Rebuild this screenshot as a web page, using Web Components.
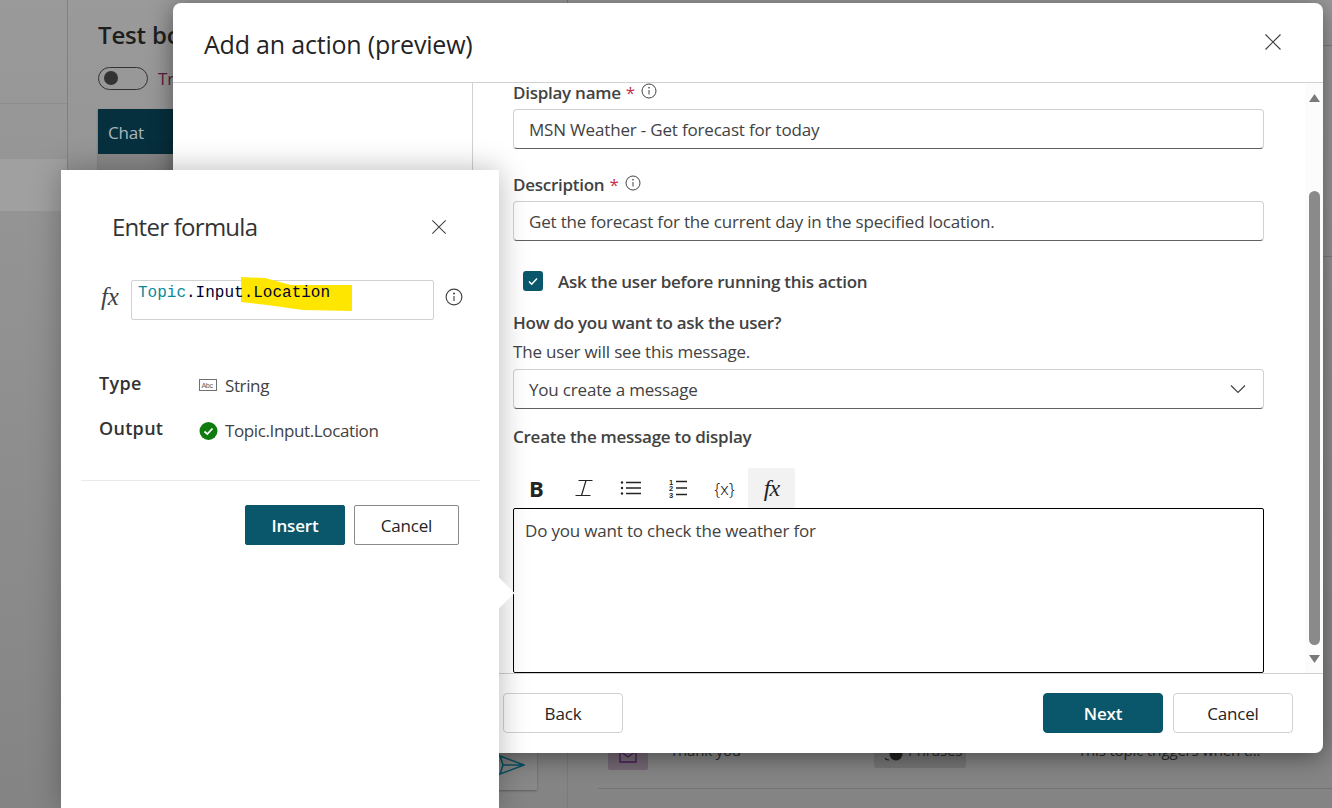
<!DOCTYPE html>
<html lang="en">
<head>
<meta charset="utf-8">
<title>Add an action</title>
<style>
    html, body { margin: 0; height: 808px; overflow: hidden; background: #8c8c8c; }
    body { position: relative; font-family: "Open Sans", "Noto Sans", sans-serif; color: #424242; }
</style>
</head>
<body>
<app-backdrop></app-backdrop>
<action-dialog heading="Add an action (preview)">
    <form-field class="first" label="Display name" required info value="MSN Weather - Get forecast for today"></form-field>
    <form-field class="second" label="Description" required info value="Get the forecast for the current day in the specified location."></form-field>
    <check-row>Ask the user before running this action</check-row>
    <form-field class="ask" label="How do you want to ask the user?" hint="The user will see this message." value="You create a message" dropdown></form-field>
    <message-editor label="Create the message to display">Do you want to check the weather for</message-editor>
</action-dialog>
<formula-popover></formula-popover>

<script>
const FONT = `font-family: "Open Sans", "Noto Sans", sans-serif; letter-spacing: -0.18px;`;
const INFO_ICON = `<svg width="16" height="16" viewBox="0 0 16 16" fill="none" stroke="#424242"><circle cx="8" cy="8" r="7"/><path d="M8 7v4.5"/><circle cx="8" cy="4.8" r=".4" fill="#424242"/></svg>`;
const CLOSE_ICON = `<svg width="18" height="18" viewBox="0 0 18 18" fill="none" stroke="#424242" stroke-width="1.2"><path d="M1.5 1.5l15 15M16.5 1.5l-15 15"/></svg>`;

class AppBackdrop extends HTMLElement {
    constructor() {
        super();
        this.attachShadow({ mode: 'open' });
        this.shadowRoot.innerHTML = `
            <style>
                :host {
                    display: grid;
                    grid-template-columns: 68px 500px 1fr;
                    height: 808px;
                    background: linear-gradient(#9a9a9a, #848484);
                    ${FONT}
                }
                .nav { border-right: 1px solid #808080; }
                .nav .rule { height: 103px; border-bottom: 1px solid #8c8c8c; }
                .nav .band { height: 52px; margin-top: 55px; background: #a0a0a0; }
                .bot { padding: 20px 30px 18px 30px; display: flex; flex-direction: column; border-right: 1px solid #7a7a7a; }
                h2 { margin: 0; font-size: 24px; line-height: 30px; font-weight: 600; color: #1e1e1e; }
                .toggle-row { display: flex; align-items: center; gap: 10px; margin-top: 16px; height: 24px; font-size: 17px; color: #5c1a3a; }
                .toggle { height: 21px; border: 1px solid #333; border-radius: 12px; display: flex; align-items: center; padding-left: 5px; width: 43px; }
                .toggle i { width: 14px; height: 14px; border-radius: 50%; background: #333; }
                .chat { flex: 1; margin-top: 19px; display: flex; flex-direction: column; background: #888; box-shadow: 0 1px 2px rgba(0,0,0,.3); }
                .chat-head { height: 45px; background: #07303e; color: #a9b7bd; font-size: 17px; line-height: 47px; padding-left: 10px; }
                .chat-body { flex: 1; display: flex; justify-content: flex-end; align-items: flex-end; padding: 0 12px 15px 0; color: #0a5568; }
                .rows { padding: 0 0 0 30px; display: flex; flex-direction: column; }
                .line { flex: none; height: 45px; margin-left: -30px; border-bottom: 1px solid #7e7e7e; }
                .line + .line { height: 210px; }
                .row { box-sizing: border-box; height: 49px; margin-top: auto; margin-bottom: 19px; border-bottom: 1px solid #747474; display: flex; align-items: flex-start; font-size: 15px; line-height: 20px; color: #2b2b2b; }
                .tile { width: 40px; height: 30px; background: #746874; margin: 0 22px 0 10px; flex: none; border-radius: 2px; display: flex; align-items: center; justify-content: center; color: #4a1a5c; }
                .name { width: 204px; }
                .chip { box-sizing: border-box; width: 92px; height: 28px; margin-right: 112px; padding-left: 11px; display: flex; gap: 5px; background: #767676; border-radius: 3px; }
                .chip svg { margin-top: 7px; }
            </style>
            <div class="nav"><div class="rule"></div><div class="band"></div></div>
            <div class="bot">
                <h2>Test bot</h2>
                <div class="toggle-row"><span class="toggle"><i></i></span><span>Track</span></div>
                <div class="chat">
                    <div class="chat-head">Chat</div>
                    <div class="chat-body">
                        <svg width="26" height="20" viewBox="0 0 26 20" fill="none" stroke="currentColor" stroke-width="1.6"><path d="M1 1l24 9-24 9 3-9-3-9zM4 10h21"/></svg>
                    </div>
                </div>
            </div>
            <div class="rows">
                <div class="line"></div>
                <div class="line"></div>
                <div class="row">
                    <span class="tile"><svg width="20" height="20" viewBox="0 0 20 20" fill="none" stroke="currentColor" stroke-width="1.3"><path d="M2 6l8 6 8-6M2 6v11h16V6"/></svg></span>
                    <span class="name">Thank you</span>
                    <span class="chip"><svg width="18" height="14" viewBox="0 0 18 14"><path d="M4 1a6 6 0 0 0 0 12" fill="none" stroke="#222" stroke-width="1.2"/><circle cx="11" cy="7" r="6.5" fill="#222"/></svg><span>Phrases</span></span>
                    <span>This topic triggers when t...</span>
                </div>
            </div>
        `;
    }
}

class ActionDialog extends HTMLElement {
    constructor() {
        super();
        this.attachShadow({ mode: 'open' });
        this.shadowRoot.innerHTML = `
            <style>
                :host {
                    position: absolute;
                    left: 173px;
                    top: 3px;
                    width: 1150px;
                    height: 750px;
                    display: flex;
                    flex-direction: column;
                    background: #fff;
                    border-radius: 8px;
                    overflow: hidden;
                    box-shadow: 0 4px 24px rgba(0,0,0,.45);
                    ${FONT}
                }
                header {
                    flex: none;
                    display: flex;
                    align-items: center;
                    justify-content: space-between;
                    padding: 0 41px 1px 31px;
                    height: 78px;
                    border-bottom: 1px solid #d1d1d1;
                }
                h1 { margin: 4px 0 0; font-size: 25px; font-weight: 500; letter-spacing: -0.2px; color: #242424; }
                .close { height: 18px; }
                .body { flex: 1; min-height: 0; display: grid; grid-template-columns: 300px 1fr 18px; border-bottom: 1px solid #d1d1d1; }
                .side { border-right: 1px solid #d1d1d1; }
                .form { padding: 0 41px 0 40px; display: flex; flex-direction: column; overflow: hidden; }
                .scroll { background: #fcfcfc; display: flex; flex-direction: column; align-items: center; padding: 11px 0 7px 0; }
                .scroll svg { flex: none; }
                .thumb { width: 11px; height: 454px; background: #8a8a8a; border-radius: 6px; margin: 89px 0 10px; }
                footer { height: 79px; flex: none; display: flex; justify-content: space-between; align-items: center; padding: 0 30px 1px 330px; box-sizing: border-box; }
                .group { display: flex; gap: 10px; }
            </style>
            <header>
                <h1></h1>
                <span class="close">${CLOSE_ICON}</span>
            </header>
            <div class="body">
                <div class="side"></div>
                <div class="form"><slot></slot></div>
                <div class="scroll">
                    <svg width="11" height="8" viewBox="0 0 11 8"><path d="M5.5 0L11 8H0z" fill="#7a7a7a"/></svg>
                    <div class="thumb"></div>
                    <svg width="11" height="8" viewBox="0 0 11 8"><path d="M0 0h11L5.5 8z" fill="#7a7a7a"/></svg>
                </div>
            </div>
            <footer>
                <ui-button>Back</ui-button>
                <div class="group">
                    <ui-button primary>Next</ui-button>
                    <ui-button>Cancel</ui-button>
                </div>
            </footer>
        `;
        this.shadowRoot.querySelector('h1').textContent = this.getAttribute('heading');
    }
}

class UiButton extends HTMLElement {
    constructor() {
        super();
        this.attachShadow({ mode: 'open' });
        this.shadowRoot.innerHTML = `
            <style>
                :host {
                    display: flex;
                    align-items: center;
                    justify-content: center;
                    box-sizing: border-box;
                    width: var(--btn-width, 120px);
                    height: 40px;
                    border: 1px solid #d1d1d1;
                    border-radius: var(--btn-radius, 4px);
                    background: #fff;
                    color: #242424;
                    font-size: 17px;
                    font-weight: 500;
                    ${FONT}
                }
                :host([primary]) { background: #0a566a; border-color: #0a566a; color: #fff; font-weight: 600; }
            </style>
            <slot></slot>
        `;
    }
}

class FormField extends HTMLElement {
    constructor() {
        super();
        this.attachShadow({ mode: 'open' });
        const req = this.hasAttribute('required') ? `<span class="req">*</span>` : '';
        const info = this.hasAttribute('info') ? `<span class="info">${INFO_ICON}</span>` : '';
        const hint = this.hasAttribute('hint') ? `<div class="hint">${this.getAttribute('hint')}</div>` : '';
        const chevron = this.hasAttribute('dropdown')
            ? `<svg width="16" height="10" viewBox="0 0 16 10" fill="none" stroke="#424242" stroke-width="1.2"><path d="M1 1.5l7 7 7-7"/></svg>` : '';
        this.shadowRoot.innerHTML = `
            <style>
                :host { display: block; }
                :host(.first) { margin-top: -2px; }
                :host(.second) { margin-top: 24px; }
                :host(.ask) { margin-top: 19px; }
                .label { display: flex; align-items: center; height: 22px; font-size: 17px; font-weight: 600; letter-spacing: -0.26px; color: #424242; }
                .req { color: #c4314b; margin-left: 5px; font-weight: 400; }
                .info { display: inline-flex; margin-left: 6px; margin-bottom: 2px; }
                .hint { margin-top: 8px; height: 22px; line-height: 22px; font-size: 17px; color: #424242; }
                .box {
                    box-sizing: border-box;
                    height: 40px;
                    margin-top: 6px;
                    padding: 0 17px 0 15px;
                    display: flex;
                    align-items: center;
                    justify-content: space-between;
                    border: 1px solid #d1d1d1;
                    border-bottom-color: #616161;
                    border-radius: 4px;
                    font-size: 17px;
                    color: #424242;
                }
            </style>
            <div class="label"><span>${this.getAttribute('label')}</span>${req}${info}</div>
            ${hint}
            <div class="box"><span>${this.getAttribute('value')}</span>${chevron}</div>
        `;
    }
}

class CheckRow extends HTMLElement {
    constructor() {
        super();
        this.attachShadow({ mode: 'open' });
        this.shadowRoot.innerHTML = `
            <style>
                :host { display: flex; align-items: center; height: 22px; margin: 29px 0 0 10px; gap: 15px; font-size: 17px; font-weight: 600; letter-spacing: -0.26px; color: #424242; }
                .box { width: 20px; height: 20px; border-radius: 3px; background: #0a566a; display: flex; align-items: center; justify-content: center; }
            </style>
            <span class="box"><svg width="12" height="12" viewBox="0 0 12 12" fill="none" stroke="#fff" stroke-width="1.5"><path d="M2 6.5l2.7 2.7L10 3.5"/></svg></span>
            <slot></slot>
        `;
    }
}

class MessageEditor extends HTMLElement {
    constructor() {
        super();
        this.attachShadow({ mode: 'open' });
        this.shadowRoot.innerHTML = `
            <style>
                :host { display: block; margin-top: 17px; }
                .label { height: 22px; line-height: 22px; font-size: 17px; font-weight: 600; letter-spacing: -0.26px; color: #424242; }
                .tools { display: flex; height: 40px; margin-top: 20px; }
                .tool { width: 47px; height: 40px; display: flex; align-items: center; justify-content: center; color: #242424; }
                .tool.on { background: #f2f2f2; border-radius: 2px; }
                .b { font-size: 22px; font-weight: 700; font-family: "Open Sans", sans-serif; letter-spacing: 0; }
                .x { font-size: 17px; font-weight: 300; letter-spacing: 0; color: #000; font-family: "Open Sans", sans-serif; }
                .fx { font-size: 24px; font-style: italic; font-family: "Liberation Serif", serif; letter-spacing: -1px; }
                .text {
                    box-sizing: border-box;
                    height: 165px;
                    border: 1px solid #000;
                    border-radius: 2px;
                    padding: 11px 11px;
                    font-size: 17px;
                    line-height: 22px;
                    color: #424242;
                }
            </style>
            <div class="label">${this.getAttribute('label')}</div>
            <div class="tools">
                <span class="tool"><span class="b">B</span></span>
                <span class="tool">
                    <svg width="18" height="18" viewBox="0 0 18 18" fill="none" stroke="#242424" stroke-width="1.2"><path d="M3.5 1.5h14M11 1.5L6.5 16.5M.5 16.5h15"/></svg>
                </span>
                <span class="tool">
                    <svg width="22" height="18" viewBox="0 0 22 18" fill="none" stroke="#242424" stroke-width="1.3"><path d="M6 3.5h15M6 9h15M6 14.5h15"/><g fill="#242424" stroke="none"><circle cx="2" cy="3.5" r="1.2"/><circle cx="2" cy="9" r="1.2"/><circle cx="2" cy="14.5" r="1.2"/></g></svg>
                </span>
                <span class="tool">
                    <svg width="20" height="20" viewBox="0 0 20 20" fill="none" stroke="#242424" stroke-width="1.3"><path d="M8 3.5h11M8 10h11M8 16.5h11"/><g fill="#242424" stroke="none" font-size="7.5" font-weight="700" font-family="Liberation Sans"><text x="1" y="6.5">1</text><text x="1" y="13">2</text><text x="1" y="19.5">3</text></g></svg>
                </span>
                <span class="tool"><span class="x">{x}</span></span>
                <span class="tool on"><span class="fx">fx</span></span>
            </div>
            <div class="text"><slot></slot></div>
        `;
    }
}

class FormulaPopover extends HTMLElement {
    constructor() {
        super();
        this.attachShadow({ mode: 'open' });
        this.shadowRoot.innerHTML = `
            <style>
                :host {
                    position: absolute;
                    left: 61px;
                    top: 170px;
                    width: 438px;
                    height: 638px;
                    box-sizing: border-box;
                    background: #fff;
                    box-shadow: 0 0 28px rgba(0,0,0,.28);
                    ${FONT}
                }
                .tip { position: absolute; left: 427px; top: 412px; width: 22px; height: 22px; background: #fff; transform: rotate(45deg); }
                .head { display: flex; justify-content: space-between; align-items: center; padding: 40px 52px 0 51px; height: 34px; }
                h3 { margin: 0 0 2px; font-size: 24px; font-weight: 500; letter-spacing: -0.73px; color: #333; }
                .close { height: 18px; display: block; }
                .close svg { width: 16px; height: 16px; margin-top: 1px; }
                .formula { display: flex; align-items: center; margin-top: 36px; padding-left: 40px; }
                .fx { width: 30px; font: italic 25px "Liberation Serif", serif; color: #424242; padding-bottom: 6px; }
                .input {
                    position: relative;
                    box-sizing: border-box;
                    width: 303px;
                    height: 40px;
                    border: 1px solid #d1d1d1;
                    border-radius: 2px;
                    padding: 2px 6px;
                    font: 16px/20px "Liberation Mono", monospace;
                    letter-spacing: 0;
                    color: #000032;
                }
                .input svg { position: absolute; left: 109px; top: -4px; }
                .code { position: relative; white-space: pre; }
                .topic { color: #0a8a9a; }
                .info { margin: 0 0 6px 11px; height: 18px; }
                .info svg { width: 18px; height: 18px; }
                dl { margin: 52px 0 0 38px; display: grid; grid-template-columns: 100px 1fr; row-gap: 20px; align-items: start; }
                dt { font-size: 18px; font-weight: 600; letter-spacing: .3px; color: #333; line-height: 23px; }
                dd { margin: 2px 0 0; display: flex; align-items: center; gap: 7px; font-size: 17px; letter-spacing: -0.38px; line-height: 23px; color: #424242; }
                .rule { height: 1px; background: #eaeaea; margin: 38px 19px 0 20px; }
                .actions { display: flex; justify-content: flex-end; gap: 9px; margin: 24px 40px 0 0; --btn-radius: 2px; }
                .actions ui-button { --btn-width: 100px; }
                .actions ui-button:last-child { --btn-width: 105px; border-color: #8a8a8a; }
            </style>
            <div class="tip"></div>
            <div class="head"><h3>Enter formula</h3><span class="close">${CLOSE_ICON}</span></div>
            <div class="formula">
                <span class="fx">fx</span>
                <div class="input">
                    <svg width="112" height="36" viewBox="0 0 112 36"><path d="M0 0 L24 1 L50 8 L111 8 L111 34 L62 33 L26 28 L0 25z" fill="#ffe600"/></svg>
                    <span class="code"><span class="topic">Topic</span>.Input.Location</span>
                </div>
                <span class="info">${INFO_ICON}</span>
            </div>
            <dl>
                <dt>Type</dt>
                <dd>
                    <svg width="19" height="13" viewBox="0 0 19 13"><rect x=".5" y=".5" width="17" height="11" fill="none" stroke="#707070"/><text x="2.4" y="8.8" font-size="7.2" font-family="Liberation Sans" fill="#616161">Abc</text></svg>
                    <span>String</span>
                </dd>
                <dt>Output</dt>
                <dd>
                    <svg width="19" height="18" viewBox="0 0 18 18"><circle cx="9" cy="9" r="9" fill="#107c10"/><path d="M5 9.5l2.8 2.6L13 6.5" fill="none" stroke="#fff" stroke-width="1.8"/></svg>
                    <span>Topic.Input.Location</span>
                </dd>
            </dl>
            <div class="rule"></div>
            <div class="actions">
                <ui-button primary>Insert</ui-button>
                <ui-button>Cancel</ui-button>
            </div>
        `;
    }
}

customElements.define('app-backdrop', AppBackdrop);
customElements.define('ui-button', UiButton);
customElements.define('form-field', FormField);
customElements.define('check-row', CheckRow);
customElements.define('message-editor', MessageEditor);
customElements.define('action-dialog', ActionDialog);
customElements.define('formula-popover', FormulaPopover);
</script>
</body>
</html>
